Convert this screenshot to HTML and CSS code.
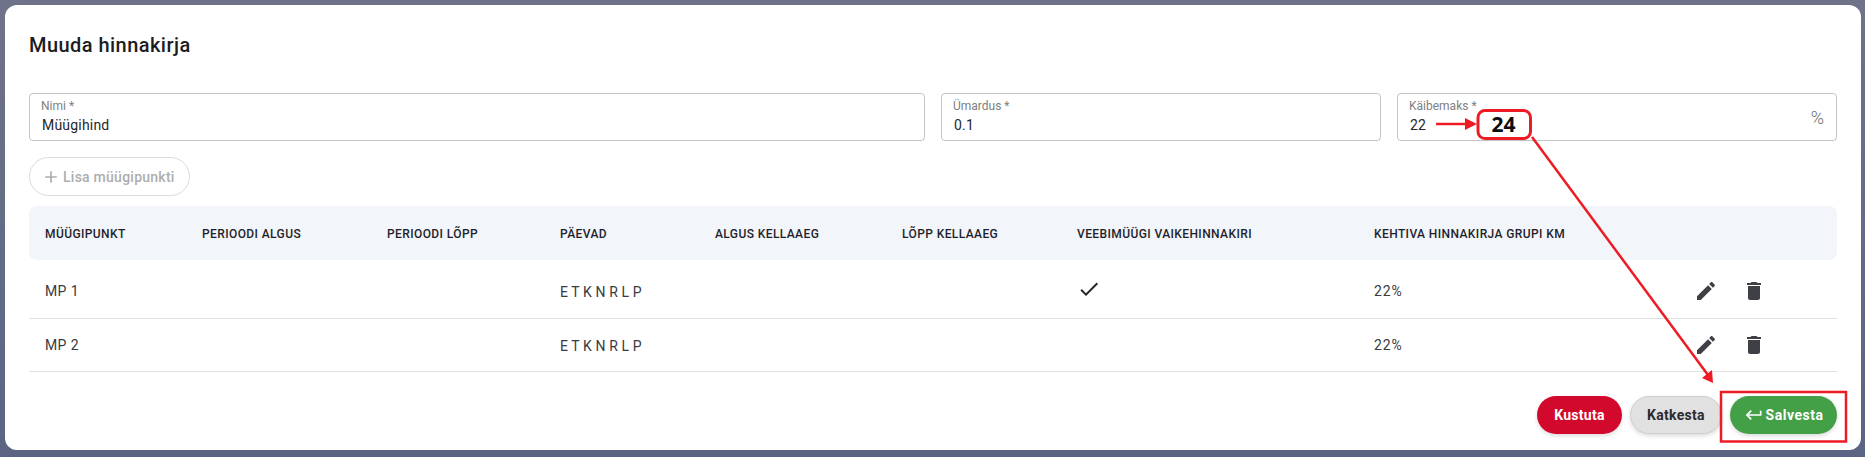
FILE: index.html
```html
<!DOCTYPE html>
<html lang="et">
<head>
<meta charset="utf-8">
<title>Muuda hinnakirja</title>
<link rel="stylesheet" href="styles.css">
</head>
<body>
<main class="dialog">
  <h1 class="title">Muuda hinnakirja</h1>
  <div class="fields">
    <div class="field field-wide"><span class="field-label">Nimi *</span><span class="field-value">Müügihind</span></div>
    <div class="field"><span class="field-label">Ümardus *</span><span class="field-value">0.1</span></div>
    <div class="field"><span class="field-label">Käibemaks *</span><span class="field-value">22</span><span class="field-suffix">%</span></div>
  </div>
  <button class="add-btn" type="button"><svg class="add-icon" viewBox="0 0 24 24"><path d="M19 13h-6v6h-2v-6H5v-2h6V5h2v6h6v2z"/></svg>Lisa müügipunkti</button>
  <div class="table">
    <div class="row head">
      <div>MÜÜGIPUNKT</div><div>PERIOODI ALGUS</div><div>PERIOODI LÕPP</div><div>PÄEVAD</div><div>ALGUS KELLAAEG</div><div>LÕPP KELLAAEG</div><div>VEEBIMÜÜGI VAIKEHINNAKIRI</div><div>KEHTIVA HINNAKIRJA GRUPI KM</div><div></div>
    </div>
    <div class="row body first">
      <div>MP 1</div><div></div><div></div><div class="days">E T K N R L P</div><div></div><div></div>
      <div><svg class="check" viewBox="0 0 24 24"><path d="M9 16.17L4.83 12l-1.42 1.41L9 19 21 7l-1.41-1.41z"/></svg></div>
      <div class="pct">22%</div>
      <div class="actions">
        <svg class="icon" viewBox="0 0 24 24"><path d="M3 17.25V21h3.75L17.81 9.94l-3.75-3.75L3 17.25zM20.71 7.04c.39-.39.39-1.02 0-1.41l-2.34-2.34c-.39-.39-1.02-.39-1.41 0l-1.83 1.83 3.75 3.75 1.83-1.83z"/></svg>
        <svg class="icon" viewBox="0 0 24 24"><path d="M6 19c0 1.1.9 2 2 2h8c1.1 0 2-.9 2-2V7H6v12zM19 4h-3.5l-1-1h-5l-1 1H5v2h14V4z"/></svg>
      </div>
    </div>
    <div class="row body">
      <div>MP 2</div><div></div><div></div><div class="days">E T K N R L P</div><div></div><div></div>
      <div></div>
      <div class="pct">22%</div>
      <div class="actions">
        <svg class="icon" viewBox="0 0 24 24"><path d="M3 17.25V21h3.75L17.81 9.94l-3.75-3.75L3 17.25zM20.71 7.04c.39-.39.39-1.02 0-1.41l-2.34-2.34c-.39-.39-1.02-.39-1.41 0l-1.83 1.83 3.75 3.75 1.83-1.83z"/></svg>
        <svg class="icon" viewBox="0 0 24 24"><path d="M6 19c0 1.1.9 2 2 2h8c1.1 0 2-.9 2-2V7H6v12zM19 4h-3.5l-1-1h-5l-1 1H5v2h14V4z"/></svg>
      </div>
    </div>
  </div>
  <div class="footer">
    <button class="btn btn-red" type="button">Kustuta</button>
    <button class="btn btn-grey" type="button">Katkesta</button>
    <button class="btn btn-green" type="button"><svg class="return-icon" viewBox="0 0 24 24"><path d="M19 7v4H5.83l3.58-3.59L8 6l-6 6 6 6 1.41-1.41L5.83 13H21V7z"/></svg>Salvesta</button>
  </div>
</main>
<svg class="annotations" viewBox="0 0 1865 457" width="1865" height="457">
  <rect class="note-box" x="1478" y="110.5" width="52.5" height="28" rx="7"/>
  <text class="note-text" x="1503.5" y="132" text-anchor="middle">24</text>
  <line class="note-line" x1="1436" y1="124" x2="1466" y2="124"/>
  <polygon class="note-head" points="1477,124 1465,118 1465,130"/>
  <line class="note-line" x1="1532" y1="137" x2="1708" y2="375"/>
  <polygon class="note-head" points="1713,383 1702,378 1712,370"/>
  <rect class="note-frame" x="1721" y="392" width="125" height="49.5"/>
</svg>
</body>
</html>
```
FILE: styles.css
```css
* { box-sizing: border-box; }
html, body { margin: 0; height: 100%; }
body {
  width: 1865px;
  height: 457px;
  overflow: hidden;
  position: relative;
  background: linear-gradient(#6e7389, #5c6484);
  font-family: Roboto, "Noto Sans", sans-serif;
  color: #1f1f24;
  padding: 5px 4px 7px 5px;
}
.dialog {
  height: 445px;
  background: #fff;
  border-radius: 12px;
  padding: 24px;
}
.title {
  margin: 0;
  font-size: 20px;
  line-height: 32px;
  font-weight: 500;
  letter-spacing: .45px;
  color: #1c1c22;
}
.fields {
  display: grid;
  grid-template-columns: repeat(12, 1fr);
  gap: 16px;
  margin-top: 32px;
}
.field {
  grid-column: span 3;
  position: relative;
  height: 48px;
  border: 1px solid #c4c4c4;
  border-radius: 4px;
  padding: 5px 12px 5px 11px;
  display: flex;
  flex-direction: column;
}
.field-wide { grid-column: span 6; }
.field-label { font-size: 12px; line-height: 15px; color: #808080; }
.field-value { font-size: 14px; line-height: 20px; color: #26262b; margin: 1px 0 0 1px; letter-spacing: .2px; }
.field-suffix { position: absolute; right: 12px; top: 13px; font-size: 18px; line-height: 22px; font-weight: 300; color: #6f6f6f; }
.add-btn {
  display: flex;
  align-items: center;
  width: 161px;
  height: 39px;
  margin-top: 16px;
  padding: 0 0 0 11px;
  background: #fff;
  border: 1px solid #dcdcdc;
  border-radius: 20px;
  color: #adadad;
  font: 500 14px/20px Roboto, sans-serif;
  letter-spacing: .25px;
}
.add-icon { width: 20px; height: 20px; fill: #adadad; margin-right: 2px; flex: none; }
.table { margin-top: 10px; }
.row {
  display: grid;
  grid-template-columns: 157px 185px 173px 155px 187px 175px 297px 336px 1fr;
  align-items: center;
}
.row > div { padding-left: 16px; }
.head {
  height: 54px;
  background: #f2f5fa;
  border-radius: 8px;
  font-size: 12px;
  font-weight: 500;
  letter-spacing: .4px;
  color: #1f1f2b;
  padding-top: 1px;
}
.body {
  height: 53px;
  border-bottom: 1px solid #e2e2e2;
  font-size: 14px;
  letter-spacing: .4px;
  color: #3a3a40;
  padding-bottom: 1px;
}
.first { height: 59px; padding-top: 4px; }
.days { font-size: 14px; letter-spacing: .1px; padding-top: 2px; }
.pct { letter-spacing: .9px; }
.check { display: block; width: 24px; height: 24px; margin: -4px 0 0 0; fill: #26262b; }
.actions { display: flex; gap: 24px; align-items: center; padding-left: 0 !important; padding-top: 1px; }
.icon { width: 24px; height: 24px; fill: #3f3f46; display: block; }
.footer { display: flex; justify-content: flex-end; gap: 8px; margin-top: 24px; }
.btn {
  display: flex;
  align-items: center;
  justify-content: center;
  height: 38px;
  border-radius: 19px;
  border: 0;
  font: 700 14px/20px Roboto, sans-serif;
  letter-spacing: .3px;
  box-shadow: 0 2px 4px rgba(0, 0, 0, .14);
}
.btn-red { width: 85px; background: #d2082d; color: #fff; }
.btn-grey { width: 92px; background: #e1e1e1; border: 1px solid #cfcfcf; color: #2a2a30; }
.btn-green { width: 107px; background: #43a047; color: #fff; letter-spacing: .5px; }
.return-icon { width: 20px; height: 20px; fill: #fff; margin-right: 2px; flex: none; }
.annotations { position: absolute; left: 0; top: 0; pointer-events: none; }
.note-box { fill: #fff; stroke: #ed1c24; stroke-width: 3; }
.note-frame { fill: none; stroke: #ed1c24; stroke-width: 2.5; }
.note-line { stroke: #ed1c24; stroke-width: 2.5; }
.note-head { fill: #ed1c24; }
.note-text { font-family: "Open Sans", sans-serif; font-weight: 700; font-size: 21px; fill: #0d0d0d; }
```
